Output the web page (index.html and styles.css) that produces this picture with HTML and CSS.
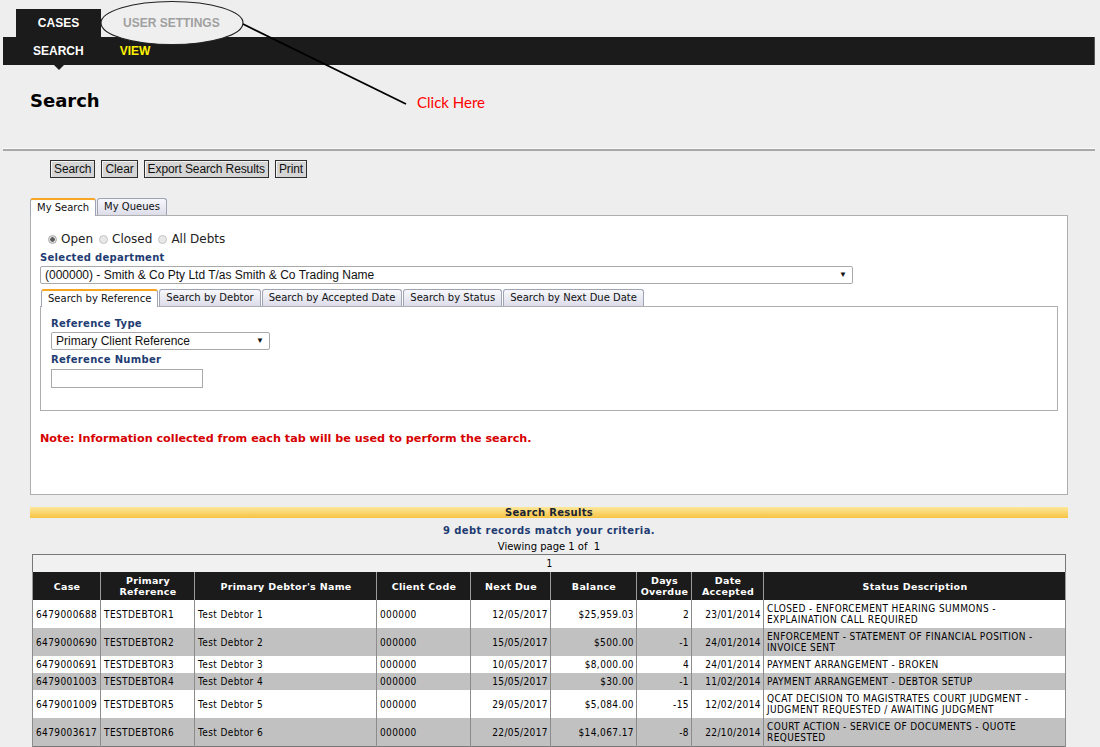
FILE: index.html
```html
<!DOCTYPE html>
<html lang="en">
<head>
    <meta charset="UTF-8">
    <title>Cases - Search</title>
    <link rel="stylesheet" href="styles.css">
</head>
<body>
    <div class="top-tabs">
        <div class="top-tab">CASES</div>
        <div class="top-tab inactive">USER SETTINGS</div>
    </div>
    <nav class="sub-nav">
        <a class="sub-item active">SEARCH</a>
        <a class="sub-item view">VIEW</a>
    </nav>

    <!-- annotation drawn over the page -->
    <svg class="note-mark" width="420" height="115" viewBox="0 0 420 115">
        <ellipse cx="172" cy="23" rx="71" ry="21.5" fill="#efefef" stroke="#222" stroke-width="1.2"/>
        <line x1="243" y1="24" x2="406" y2="104" stroke="#000" stroke-width="1.8"/>
    </svg>
    <span class="click-here">Click Here</span>

    <h1 class="page-title">Search</h1>
    <div class="divider"></div>

    <div class="actions">
        <button class="btn">Search</button>
        <button class="btn">Clear</button>
        <button class="btn">Export Search Results</button>
        <button class="btn">Print</button>
    </div>

    <div class="tabs">
        <div class="tab active">My Search</div>
        <div class="tab">My Queues</div>
    </div>
    <div class="panel">
        <div class="radios">
            <label><span class="radio checked"></span>Open</label>
            <label><span class="radio"></span>Closed</label>
            <label><span class="radio"></span>All Debts</label>
        </div>
        <div class="field-label">Selected department</div>
        <div class="select wide">(000000) - Smith &amp; Co Pty Ltd T/as Smith &amp; Co Trading Name</div>

        <div class="tabs inner">
            <div class="tab active">Search by Reference</div>
            <div class="tab">Search by Debtor</div>
            <div class="tab">Search by Accepted Date</div>
            <div class="tab">Search by Status</div>
            <div class="tab">Search by Next Due Date</div>
        </div>
        <div class="inner-panel">
            <div class="field-label">Reference Type</div>
            <div class="select small">Primary Client Reference</div>
            <div class="field-label">Reference Number</div>
            <input class="text-input" type="text">
        </div>

        <p class="note">Note: Information collected from each tab will be used to perform the search.</p>
    </div>

    <div class="results">
        <div class="results-bar">Search Results</div>
        <div class="results-count">9 debt records match your criteria.</div>
        <div class="results-page">Viewing page 1 of&nbsp; 1</div>

        <table class="results-table">
            <colgroup>
                <col style="width:68px">
                <col style="width:94px">
                <col style="width:182px">
                <col style="width:94px">
                <col style="width:80px">
                <col style="width:86px">
                <col style="width:55px">
                <col style="width:72px">
                <col>
            </colgroup>
            <thead>
                <tr class="pager"><td colspan="9">1</td></tr>
                <tr class="head">
                    <th>Case</th>
                    <th>Primary Reference</th>
                    <th>Primary Debtor's Name</th>
                    <th>Client Code</th>
                    <th>Next Due</th>
                    <th>Balance</th>
                    <th>Days Overdue</th>
                    <th>Date Accepted</th>
                    <th>Status Description</th>
                </tr>
            </thead>
            <tbody>
                <tr>
                    <td>6479000688</td><td>TESTDEBTOR1</td><td>Test Debtor 1</td><td>000000</td>
                    <td class="num">12/05/2017</td><td class="num">$25,959.03</td><td class="num">2</td><td class="num">23/01/2014</td>
                    <td class="status">CLOSED - ENFORCEMENT HEARING SUMMONS - EXPLAINATION CALL REQUIRED</td>
                </tr>
                <tr>
                    <td>6479000690</td><td>TESTDEBTOR2</td><td>Test Debtor 2</td><td>000000</td>
                    <td class="num">15/05/2017</td><td class="num">$500.00</td><td class="num">-1</td><td class="num">24/01/2014</td>
                    <td class="status">ENFORCEMENT - STATEMENT OF FINANCIAL POSITION - INVOICE SENT</td>
                </tr>
                <tr>
                    <td>6479000691</td><td>TESTDEBTOR3</td><td>Test Debtor 3</td><td>000000</td>
                    <td class="num">10/05/2017</td><td class="num">$8,000.00</td><td class="num">4</td><td class="num">24/01/2014</td>
                    <td class="status">PAYMENT ARRANGEMENT - BROKEN</td>
                </tr>
                <tr>
                    <td>6479001003</td><td>TESTDEBTOR4</td><td>Test Debtor 4</td><td>000000</td>
                    <td class="num">15/05/2017</td><td class="num">$30.00</td><td class="num">-1</td><td class="num">11/02/2014</td>
                    <td class="status">PAYMENT ARRANGEMENT - DEBTOR SETUP</td>
                </tr>
                <tr>
                    <td>6479001009</td><td>TESTDEBTOR5</td><td>Test Debtor 5</td><td>000000</td>
                    <td class="num">29/05/2017</td><td class="num">$5,084.00</td><td class="num">-15</td><td class="num">12/02/2014</td>
                    <td class="status">QCAT DECISION TO MAGISTRATES COURT JUDGMENT - JUDGMENT REQUESTED / AWAITING JUDGMENT</td>
                </tr>
                <tr>
                    <td>6479003617</td><td>TESTDEBTOR6</td><td>Test Debtor 6</td><td>000000</td>
                    <td class="num">22/05/2017</td><td class="num">$14,067.17</td><td class="num">-8</td><td class="num">22/10/2014</td>
                    <td class="status">COURT ACTION - SERVICE OF DOCUMENTS - QUOTE REQUESTED</td>
                </tr>
            </tbody>
        </table>
    </div>
</body>
</html>
```

FILE: styles.css
```css
* {
    box-sizing: border-box;
}

body {
    margin: 0;
    background: #eeeeee;
    font-family: "DejaVu Sans", Verdana, sans-serif;
    color: #000;
    position: relative;
}

/* Navigation du haut */
.top-tabs {
    display: flex;
    height: 37px;
    padding: 9px 0 0 16px;
}

.top-tab {
    position: relative;
    z-index: 2;
    width: 85px;
    height: 28px;
    line-height: 28px;
    text-align: center;
    background: #1b1b1b;
    color: #fff;
    font-family: "Liberation Sans", Arial, sans-serif;
    font-weight: bold;
    font-size: 12px;
}

.top-tab.inactive {
    width: auto;
    margin-left: 22px;
    background: none;
    color: #a0a0a0;
}

.sub-nav {
    display: flex;
    align-items: center;
    height: 28px;
    margin: 0 5px 0 3px;
    padding-left: 30px;
    background: #1b1b1b;
    border-right: 1px solid #555;
}

.sub-item {
    position: relative;
    font-family: "Liberation Sans", Arial, sans-serif;
    font-weight: bold;
    font-size: 12px;
    color: #fff;
    margin-right: 36px;
}

.sub-item.view {
    color: #fff200;
}

.sub-item.active::after {
    content: "";
    position: absolute;
    left: 20px;
    top: 20px;
    border-left: 6px solid transparent;
    border-right: 6px solid transparent;
    border-top: 6px solid #1b1b1b;
}

.note-mark {
    position: absolute;
    left: 0;
    top: 0;
    z-index: 1;
}

.click-here {
    position: absolute;
    left: 417px;
    top: 93px;
    font-family: Lato, "Open Sans", sans-serif;
    font-size: 15px;
    color: #ff0000;
}

.page-title {
    margin: 24px 0 0 30px;
    font-size: 18px;
    line-height: 24px;
    font-weight: bold;
}

.divider {
    margin: 35px 5px 0 3px;
    height: 3px;
    border-top: 1px solid #fafafa;
    background: #a8a8a8;
}

/* Boutons */
.actions {
    display: flex;
    gap: 6px;
    margin-top: 9px;
    padding-left: 50px;
}

.btn {
    height: 18px;
    padding: 0 3px;
    border: 1px solid #2e2e2e;
    background: #d5d5d5;
    box-shadow: inset 1px 1px 0 #f4f4f4;
    font-family: "Liberation Sans", Arial, sans-serif;
    font-size: 12px;
    letter-spacing: -0.1px;
    line-height: 15px;
    color: #111;
}

/* Onglets */
.tabs {
    display: flex;
    margin: 20px 0 0 30px;
    position: relative;
    z-index: 1;
}

.tab {
    height: 17px;
    padding: 0 6px;
    margin-right: 1px;
    border: 1px solid #9ea4b4;
    border-bottom: none;
    border-radius: 3px 3px 0 0;
    background: linear-gradient(#f7f7fc, #dcdde9);
    font-size: 10px;
    line-height: 16px;
    color: #111;
}

.tab.active {
    height: 18px;
    background: #fff;
    border-top: 2px solid #f6a623;
    line-height: 15px;
}

.panel {
    height: 280px;
    margin: -1px 32px 0 30px;
    padding: 16px 9px 0 9px;
    background: #fff;
    border: 1px solid #aeaeae;
}

.radios {
    display: flex;
    gap: 6px;
    margin-left: 8px;
    font-size: 12px;
    line-height: 14px;
    color: #222;
}

.radios label {
    display: flex;
    align-items: center;
}

.radio {
    width: 9px;
    height: 9px;
    margin-right: 4px;
    border-radius: 50%;
    border: 1px solid #c4c4c4;
    background: #e8e8e8;
}

.radio.checked {
    background: radial-gradient(circle, #5c5c5c 0 2px, #e2e2e2 2.5px);
    border-color: #a8a8a8;
}

.field-label {
    margin-top: 6px;
    font-size: 10px;
    font-weight: bold;
    line-height: 12px;
    color: #1e3c72;
    letter-spacing: 0.3px;
}

.select {
    position: relative;
    height: 18px;
    margin-top: 2px;
    padding-left: 4px;
    border: 1px solid #a9a9a9;
    border-radius: 2px;
    background: #fff;
    font-family: "Liberation Sans", Arial, sans-serif;
    font-size: 12px;
    line-height: 16px;
    color: #111;
}

.select::after {
    content: "\25BC";
    position: absolute;
    right: 5px;
    top: 0;
    font-size: 8px;
}

.select.wide {
    width: 813px;
}

.select.small {
    width: 219px;
}

.tabs.inner {
    margin: 5px 0 0 1px;
}

.inner-panel {
    height: 105px;
    margin-top: -1px;
    padding: 11px 10px 0 10px;
    border: 1px solid #aeaeae;
}

.inner-panel .field-label {
    margin-top: 4px;
}

.inner-panel .field-label:first-child {
    margin-top: 0;
}

.text-input {
    display: block;
    width: 152px;
    height: 19px;
    margin-top: 3px;
    border: 1px solid #a9a9a9;
}

.note {
    margin: 21px 0 0 0;
    font-size: 11.2px;
    font-weight: bold;
    line-height: 14px;
    color: #d60000;
}

/* Resultats */
.results {
    margin: 12px 32px 0 30px;
}

.results-bar {
    height: 11px;
    background: linear-gradient(#fde79a, #f6c443);
    text-align: center;
    font-size: 10px;
    font-weight: bold;
    line-height: 11px;
    color: #1b2433;
    letter-spacing: 0.3px;
}

.results-count {
    margin-top: 7px;
    text-align: center;
    font-size: 10px;
    font-weight: bold;
    line-height: 12px;
    color: #1e3c72;
    letter-spacing: 0.4px;
}

.results-page {
    margin-top: 4px;
    text-align: center;
    font-size: 10px;
    line-height: 12px;
}

.results-table {
    width: 1034px;
    margin: 1px 0 0 2px;
    table-layout: fixed;
    border-collapse: collapse;
    border: 1px solid #777;
    font-size: 10px;
    font-stretch: condensed;
}

.results-table td,
.results-table th {
    padding: 3px 2px 3px 3px;
    line-height: 11px;
    letter-spacing: 0.4px;
    border-left: 1px solid #8c8c8c;
    border-right: 1px solid #8c8c8c;
    vertical-align: middle;
}

.results-table td.status {
    padding: 3px 6px 3px 3px;
}

.pager td {
    height: 17px;
    background: #f1f1f1;
    text-align: center;
    border: none;
}

.head th {
    background: #1b1b1b;
    color: #fff;
    font-size: 9.5px;
    font-stretch: normal;
    font-weight: bold;
    text-align: center;
    letter-spacing: 0.3px;
    border-color: #9a9a9a;
}

.results-table tbody tr {
    background: #fff;
}

.results-table tbody tr:nth-child(even) {
    background: #c1c1c1;
}

.results-table td.num {
    text-align: right;
}
```
